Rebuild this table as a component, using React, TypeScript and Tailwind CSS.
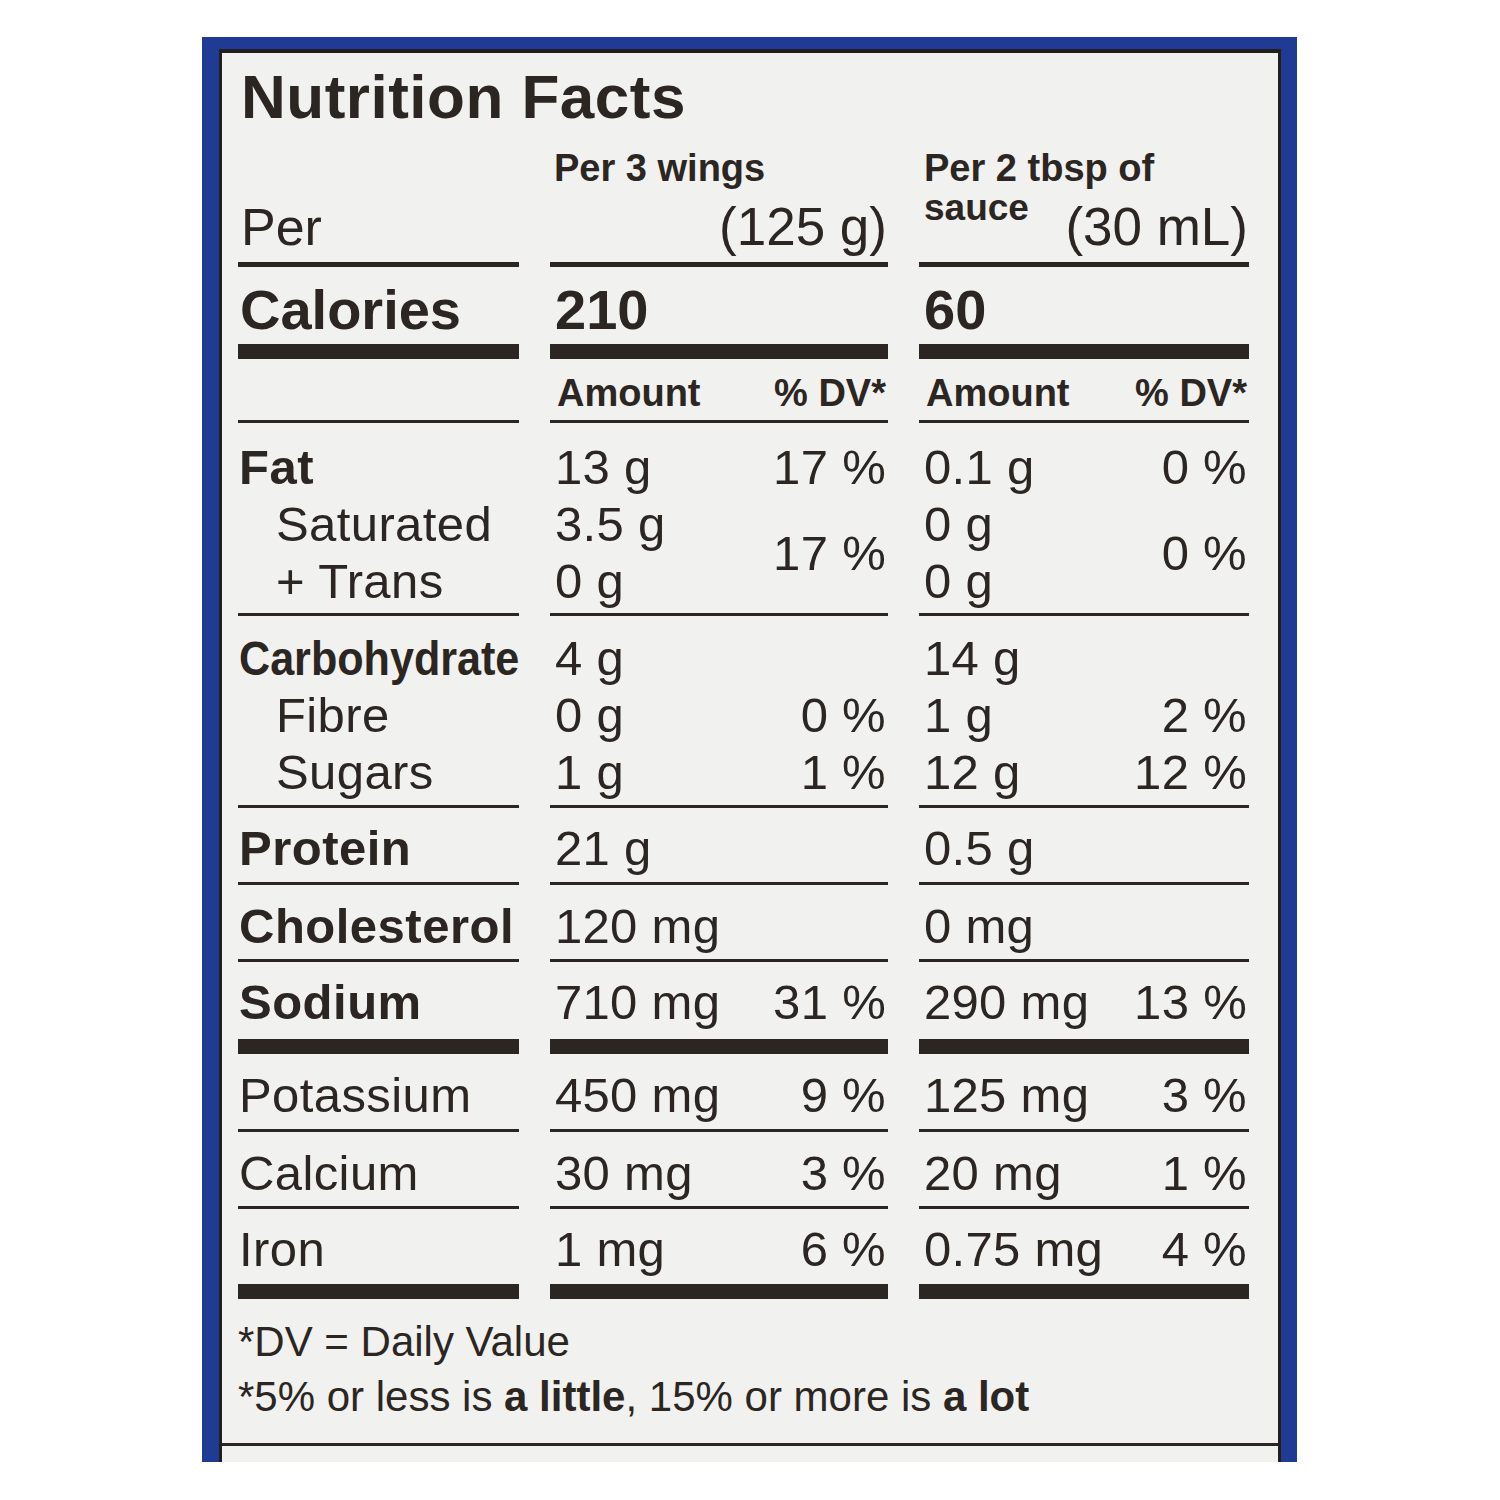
import React from 'react';

const ink = 'text-[#2b2622]';

type Line = { text: string; span?: number };

const rows = [
  {
    label: 'Fat',
    bold: true,
    cls: 'h-[193px] pt-[16px] border-b-[3px]',
    subs: ['Saturated', '+ Trans'],
    a: [['13 g', '3.5 g', '0 g'], [{ text: '17 %' }, { text: '17 %', span: 2 }]],
    b: [['0.1 g', '0 g', '0 g'], [{ text: '0 %' }, { text: '0 %', span: 2 }]],
  },
  {
    label: 'Carbohydrate',
    bold: true,
    narrow: true,
    cls: 'h-[192px] pt-[14px] border-b-[3px]',
    subs: ['Fibre', 'Sugars'],
    a: [['4 g', '0 g', '1 g'], [{ text: '' }, { text: '0 %' }, { text: '1 %' }]],
    b: [['14 g', '1 g', '12 g'], [{ text: '' }, { text: '2 %' }, { text: '12 %' }]],
  },
  { label: 'Protein', bold: true, cls: 'h-[77px] pt-[12px] border-b-[3px]', a: [['21 g'], []], b: [['0.5 g'], []] },
  { label: 'Cholesterol', bold: true, cls: 'h-[77px] pt-[13px] border-b-[3px]', a: [['120 mg'], []], b: [['0 mg'], []] },
  { label: 'Sodium', bold: true, cls: 'h-[92px] pt-[12px] border-b-[15px]', a: [['710 mg'], [{ text: '31 %' }]], b: [['290 mg'], [{ text: '13 %' }]] },
  { label: 'Potassium', cls: 'h-[78px] pt-[13px] border-b-[3px]', a: [['450 mg'], [{ text: '9 %' }]], b: [['125 mg'], [{ text: '3 %' }]] },
  { label: 'Calcium', cls: 'h-[77px] pt-[13px] border-b-[3px]', a: [['30 mg'], [{ text: '3 %' }]], b: [['20 mg'], [{ text: '1 %' }]] },
  { label: 'Iron', cls: 'h-[90px] pt-[12px] border-b-[15px]', a: [['1 mg'], [{ text: '6 %' }]], b: [['0.75 mg'], [{ text: '4 %' }]] },
] as {
  label: string;
  bold?: boolean;
  narrow?: boolean;
  cls: string;
  subs?: string[];
  a: [string[], Line[]];
  b: [string[], Line[]];
}[];

const ValueCell: React.FC<{ cls: string; data: [string[], Line[]] }> = ({ cls, data }) => (
  <div className={`border-[#2b2622] flex justify-between pl-[5px] pr-[2px] ${cls}`}>
    <div className="flex flex-col">
      {data[0].map((t, i) => (
        <div key={i} className="h-[57px] leading-[57px] whitespace-nowrap">{t}</div>
      ))}
    </div>
    <div className="flex flex-col items-end">
      {data[1].map((l, i) =>
        l.span === 2 ? (
          <div key={i} className="h-[114px] flex items-center">
            <span className="leading-[57px]">{l.text}</span>
          </div>
        ) : (
          <div key={i} className="h-[57px] leading-[57px] whitespace-nowrap">{l.text}</div>
        )
      )}
    </div>
  </div>
);

export default function App() {
  return (
    <div className="w-[1500px] h-[1500px] bg-white font-['Liberation_Sans',Arial,sans-serif] pt-[37px] pl-[202px]">
      <div className="w-[1095px] h-[1425px] bg-[#1f3b93] pt-[12px] pl-[17px] pr-[16px]">
        <div className={`h-full bg-[#f1f1ef] border-l-[3px] border-t-[4px] border-r-[3px] border-[#231f1c] flex flex-col overflow-hidden ${ink}`}>
          <div className="pl-[16px] pr-[29px]">
            {/* title */}
            <div className="pt-[13px] pl-[3px] h-[74px]">
              <h1 className="text-[62px] leading-[62px] font-bold tracking-[0.5px]">Nutrition Facts</h1>
            </div>

            <div className="grid grid-cols-[281px_338px_330px] gap-x-[31px]">
              {/* serving header */}
              <div className="h-[140px] border-b-[5px] border-[#2b2622] flex flex-col justify-end pb-[9px] pl-[3px]">
                <div className="text-[52px] leading-[52px]">Per</div>
              </div>
              <div className="h-[140px] border-b-[5px] border-[#2b2622] flex flex-col pt-[23px] pb-[9px] pl-[4px] pr-[1px]">
                <div className="text-[38px] leading-[37px] font-bold">Per 3 wings</div>
                <div className="text-[53px] leading-[52px] text-right mt-[14px]">(125 g)</div>
              </div>
              <div className="h-[140px] border-b-[5px] border-[#2b2622] flex flex-col pt-[23px] pb-[9px] pl-[5px] pr-[1px]">
                <div className="text-[38px] leading-[37px] font-bold">Per 2 tbsp of</div>
                <div className="flex justify-between items-start">
                  <span className="text-[37px] leading-[37px] font-bold mt-[2px]">sauce</span>
                  <span className="text-[53px] leading-[52px] mt-[14px]">(30 mL)</span>
                </div>
              </div>

              {/* calories */}
              <div className="h-[92px] pt-[15px] border-b-[15px] border-[#2b2622] pl-[2px] text-[56px] leading-[56px] font-bold">Calories</div>
              <div className="h-[92px] pt-[15px] border-b-[15px] border-[#2b2622] pl-[5px] text-[56px] leading-[56px] font-bold">210</div>
              <div className="h-[92px] pt-[15px] border-b-[15px] border-[#2b2622] pl-[5px] text-[56px] leading-[56px] font-bold">60</div>

              {/* column header */}
              <div className="h-[64px] border-b-[3px] border-[#2b2622]" />
              <div className="h-[64px] pt-[16px] border-b-[3px] border-[#2b2622] flex justify-between pl-[7px] pr-[2px] text-[38px] leading-[37px] font-bold">
                <span>Amount</span>
                <span>% DV*</span>
              </div>
              <div className="h-[64px] pt-[16px] border-b-[3px] border-[#2b2622] flex justify-between pl-[7px] pr-[2px] text-[38px] leading-[37px] font-bold">
                <span>Amount</span>
                <span>% DV*</span>
              </div>

              {/* nutrients */}
              {rows.map((r) => (
                <React.Fragment key={r.label}>
                  <div className={`border-[#2b2622] pl-[1px] text-[49px] ${r.cls}`}>
                    <div className={`h-[57px] leading-[57px] whitespace-nowrap ${r.bold ? 'font-bold tracking-[0.5px]' : 'tracking-[0.4px]'}`}>
                      {r.narrow ? <span className="inline-block origin-left scale-x-[0.88] tracking-normal">{r.label}</span> : r.label}
                    </div>
                    {r.subs?.map((s) => (
                      <div key={s} className="h-[57px] leading-[57px] pl-[37px] whitespace-nowrap tracking-[0.4px]">{s}</div>
                    ))}
                  </div>
                  <div className="text-[49px] tracking-[0.3px]">
                    <ValueCell cls={r.cls} data={r.a} />
                  </div>
                  <div className="text-[49px] tracking-[0.3px]">
                    <ValueCell cls={r.cls} data={r.b} />
                  </div>
                </React.Fragment>
              ))}
            </div>

            {/* footnote */}
            <div className="pt-[15px] pb-[19px] text-[42px] leading-[55px] whitespace-nowrap">
              <p>*DV = Daily Value</p>
              <p>
                *5% or less is <b className="font-bold">a little</b>, 15% or more is <b className="font-bold">a lot</b>
              </p>
            </div>
          </div>
          <div className="flex-1 border-t-[3px] border-[#2b2622]" />
        </div>
      </div>
    </div>
  );
}
